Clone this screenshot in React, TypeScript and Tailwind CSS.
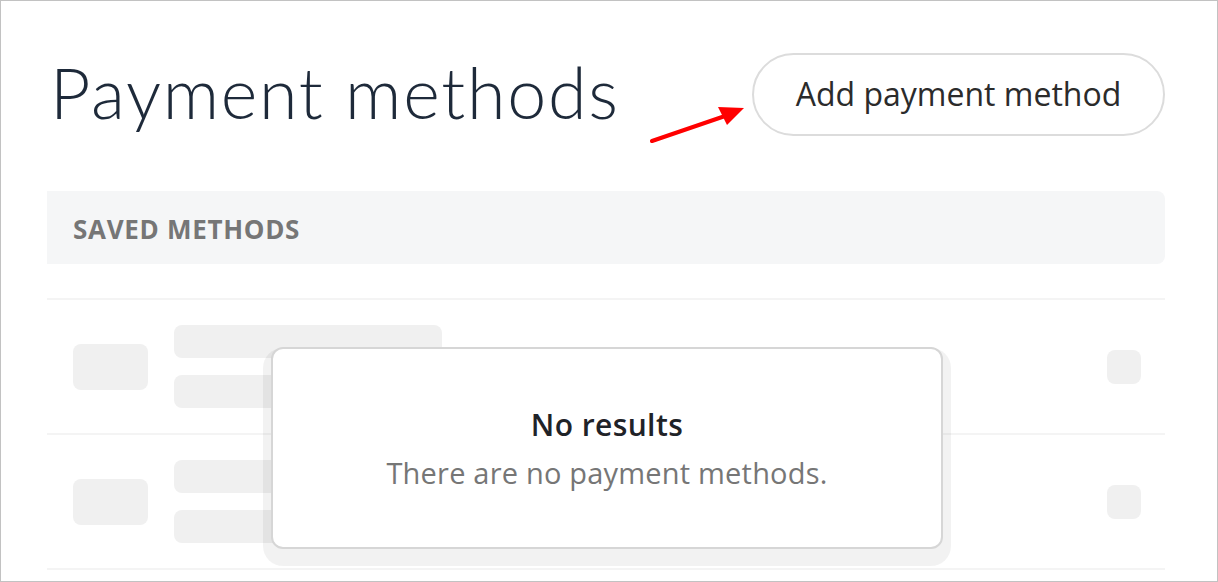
import React from 'react';

const ui = { fontFamily: '"Open Sans", "Noto Sans", sans-serif' };

function SkeletonRow() {
  return (
    <div className="flex h-[135px] items-center border-t-2 border-[#f4f4f4] pl-[26px] pr-[24px]">
      <div className="h-[46px] w-[75px] rounded-lg bg-[#f0f0f0]" />
      <div className="ml-[26px] flex flex-col gap-[17px]">
        <div className="h-[33px] w-[268px] rounded-lg bg-[#f0f0f0]" />
        <div className="h-[33px] w-[268px] rounded-lg bg-[#f0f0f0]" />
      </div>
      <div className="ml-auto h-[34px] w-[34px] rounded-lg bg-[#f0f0f0]" />
    </div>
  );
}

export default function App() {
  return (
    <div className="relative h-[582px] w-[1218px] overflow-hidden border border-[#c2c2c2] bg-white" style={ui}>
      <div className="w-[1164px] pl-[46px] pt-[52px]">
        <div className="flex items-center justify-between">
          <h1
            className="mb-[6px] ml-[3px] text-[70px] font-light leading-none tracking-[1.7px] text-[#1e2a3a]"
            style={{ fontFamily: 'Lato, sans-serif' }}
          >
            Payment methods
          </h1>
          <div className="relative">
            <svg className="absolute left-[-104px] top-[50px]" width="100" height="40" viewBox="0 0 100 40">
              <line x1="4" y1="38" x2="80" y2="12" stroke="#ff0000" strokeWidth="4" strokeLinecap="round" />
              <polygon points="96,5 70,4 79,22" fill="#ff0000" />
            </svg>
            <button className="h-[83px] w-[413px] rounded-full border-2 border-[#dcdcdc] bg-white pb-[2px] text-[32px] text-[#2b2b2b]">
              Add payment method
            </button>
          </div>
        </div>

        <div className="mt-[55px] flex h-[73px] items-center rounded-r-lg bg-[#f5f6f7] pl-[26px]">
          <span className="mt-[3px] text-[26px] font-bold tracking-[0.7px] text-[#767676]">SAVED METHODS</span>
        </div>

        <div className="mt-[34px] border-b-2 border-[#f4f4f4]">
          <SkeletonRow />
          <SkeletonRow />
        </div>
      </div>

      <div className="absolute left-[270px] top-[346px] flex h-[202px] w-[672px] flex-col items-center justify-center rounded-xl border-2 border-[#d6d6d6] bg-white shadow-[0_9px_0_8px_rgba(0,0,0,0.05)]">
        <div className="mb-[2px] text-[30px] font-semibold leading-none tracking-[0.4px] text-[#1f2328]">No results</div>
        <div className="mt-[16px] text-[29px] leading-none tracking-[0.2px] text-[#767676]">There are no payment methods.</div>
      </div>
    </div>
  );
}
